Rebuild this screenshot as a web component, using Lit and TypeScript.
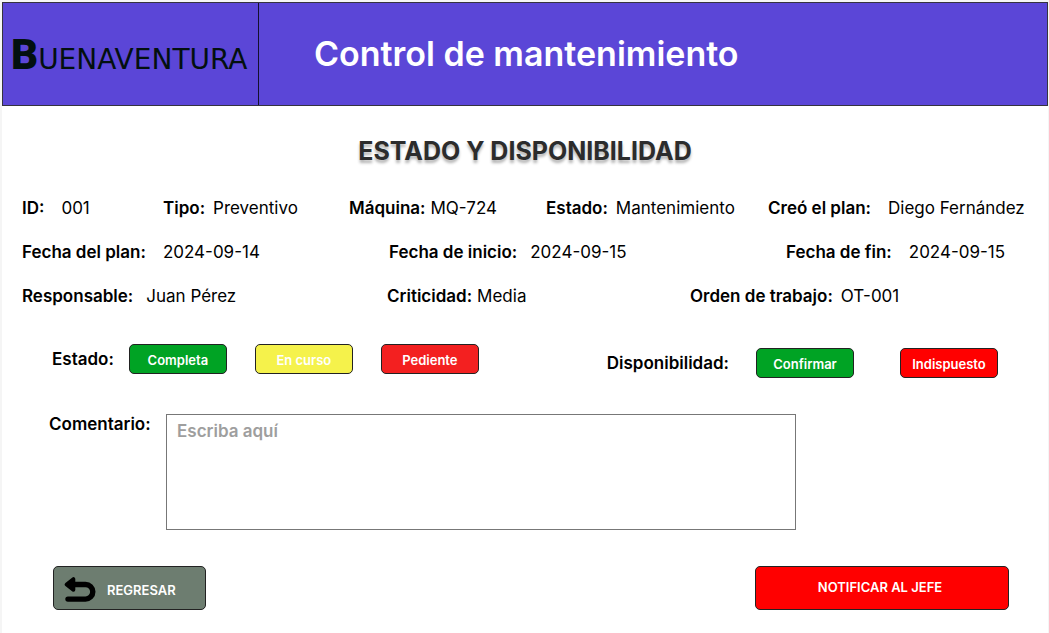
import { LitElement, html, css } from "lit";
import { customElement, state } from "lit/decorators.js";

interface Field {
  label: string;
  value: string;
  gap: "near" | "mid" | "loose" | "far";
}

const GENERAL: Field[] = [
  { label: "ID:", value: "001", gap: "far" },
  { label: "Tipo:", value: "Preventivo", gap: "mid" },
  { label: "Máquina:", value: "MQ-724", gap: "near" },
  { label: "Estado:", value: "Mantenimiento", gap: "mid" },
  { label: "Creó el plan:", value: "Diego Fernández", gap: "far" },
];

const DATES: Field[] = [
  { label: "Fecha del plan:", value: "2024-09-14", gap: "far" },
  { label: "Fecha de inicio:", value: "2024-09-15", gap: "loose" },
  { label: "Fecha de fin:", value: "2024-09-15", gap: "far" },
];

const WORK: Field[] = [
  { label: "Responsable:", value: "Juan Pérez", gap: "loose" },
  { label: "Criticidad:", value: "Media", gap: "near" },
  { label: "Orden de trabajo:", value: "OT-001", gap: "mid" },
];

@customElement("plan-fields")
export class PlanFields extends LitElement {
  static properties = { fields: { attribute: false } };
  declare fields: Field[];

  static styles = css`
    :host {
      display: grid;
      font-size: 17px;
      line-height: 24px;
    }
    .field {
      display: flex;
      white-space: nowrap;
    }
    .near { gap: 5px; }
    .mid { gap: 8px; }
    .loose { gap: 13px; }
    .far { gap: 17px; }
    .label { font-weight: 600; }
  `;

  render() {
    return (this.fields ?? []).map(
      (f) => html`<div class="field ${f.gap}">
        <span class="label">${f.label}</span><span>${f.value}</span>
      </div>`
    );
  }
}

@customElement("app-root")
export class AppRoot extends LitElement {
  @state() private comment = "";

  static styles = css`
    :host {
      display: block;
      box-sizing: border-box;
      min-height: 100vh;
      padding: 2px 1px 0 2px;
      background: #f5f5f5;
      color: #000;
      font-family: Inter, "Liberation Sans", sans-serif;
      font-size: 17px;
      line-height: 24px;
    }
    * { box-sizing: border-box; }
    .page {
      min-height: calc(100vh - 2px);
      background: #fff;
    }
    .header {
      display: flex;
      height: 104px;
      border: 1px solid #35333f;
      background: #5b46d7;
    }
    .brand {
      display: flex;
      flex: none;
      align-items: baseline;
      width: 256px;
      padding: 28px 0 0 8px;
      border-right: 1px solid #14102e;
      color: #03100f;
      font-family: "DejaVu Sans", sans-serif;
      font-size: 28px;
      line-height: 48px;
      white-space: nowrap;
    }
    .initial {
      font-family: Roboto, sans-serif;
      font-size: 42px;
      font-weight: 900;
    }
    .title {
      margin: 0;
      padding: 29px 0 0 55px;
      color: #fff;
      font-size: 34px;
      font-weight: 600;
      line-height: 44px;
    }
    .subtitle {
      margin: 0;
      padding: 28px 0;
      color: #2c2c2c;
      font-size: 25px;
      font-weight: 700;
      line-height: 34px;
      text-align: center;
      text-shadow: 0 3px 3px rgba(0, 0, 0, 0.3);
    }
    .details {
      display: grid;
      gap: 20px;
      padding: 0 20px;
    }
    .general { grid-template-columns: 141fr 186fr 197fr 222fr 260fr; }
    .dates { grid-template-columns: 367fr 397fr 242fr; }
    .work { grid-template-columns: 365fr 303fr 338fr; }
    .states {
      display: flex;
      justify-content: space-between;
      align-items: flex-end;
      padding: 36px 50px 0;
    }
    .group {
      display: flex;
      align-items: center;
      gap: 28px;
      margin: 0;
      padding: 0 0 4px;
      border: 0;
    }
    .wide {
      gap: 46px;
      padding: 4px 0 0;
    }
    .caption {
      margin-right: -13px;
      font-weight: 600;
    }
    .wide .caption { margin-right: -19px; }
    button {
      border: 1px solid #222;
      border-radius: 5px;
      color: #fff;
      font: 600 13px/20px Inter, "Liberation Sans", sans-serif;
      cursor: pointer;
    }
    .chip {
      width: 98px;
      height: 30px;
      padding: 2px 0 0;
    }
    .green { background: #00a324; }
    .yellow { background: #f5f24b; }
    .coral { background: #f32020; }
    .red { background: #f00; }
    .comment {
      display: grid;
      grid-template-columns: 117px 5fr 2fr;
      padding: 36px 0 36px 47px;
    }
    .comment label {
      font-weight: 600;
      line-height: 20px;
    }
    textarea {
      display: block;
      width: 100%;
      height: 116px;
      padding: 4px 10px;
      border: 1px solid #777;
      border-radius: 0;
      background: #fff;
      color: #000;
      font: 600 17px/24px Inter, "Liberation Sans", sans-serif;
      resize: none;
    }
    textarea::placeholder {
      color: #9e9e9e;
      opacity: 1;
    }
    .actions {
      display: flex;
      justify-content: space-between;
      padding: 0 39px 22px 51px;
    }
    .back {
      display: flex;
      align-items: center;
      gap: 11px;
      width: 153px;
      height: 44px;
      padding: 3px 0 0 10px;
      background: #6d7d70;
    }
    .notify {
      width: 254px;
      height: 44px;
      padding: 0 4px 3px 0;
    }
  `;

  private onInput(e: Event) {
    this.comment = (e.target as HTMLTextAreaElement).value;
  }

  render() {
    return html`
      <div class="page">
        <header class="header">
          <div class="brand"><span class="initial">B</span><span>UENAVENTURA</span></div>
          <h1 class="title">Control de mantenimiento</h1>
        </header>
        <main>
          <h2 class="subtitle">ESTADO Y DISPONIBILIDAD</h2>
          <section class="details">
            <plan-fields class="general" .fields=${GENERAL}></plan-fields>
            <plan-fields class="dates" .fields=${DATES}></plan-fields>
            <plan-fields class="work" .fields=${WORK}></plan-fields>
          </section>
          <section class="states">
            <div class="group" role="group" aria-labelledby="state">
              <span class="caption" id="state">Estado:</span>
              <button class="chip green">Completa</button>
              <button class="chip yellow">En curso</button>
              <button class="chip coral">Pediente</button>
            </div>
            <div class="group wide" role="group" aria-labelledby="availability">
              <span class="caption" id="availability">Disponibilidad:</span>
              <button class="chip green">Confirmar</button>
              <button class="chip red">Indispuesto</button>
            </div>
          </section>
          <section class="comment">
            <label for="comment">Comentario:</label>
            <textarea id="comment" placeholder="Escriba aquí" .value=${this.comment} @input=${this.onInput}></textarea>
          </section>
          <footer class="actions">
            <button class="back">
              <svg width="32" height="26" viewBox="0 0 32 26" aria-hidden="true">
                <path d="M8 7.5H21.5a7.2 7.2 0 0 1 0 14.6H4" fill="none" stroke="#000" stroke-width="5.4" stroke-linecap="round" />
                <path d="M2.5 7.5L9.5 2V13Z" stroke="#000" stroke-width="3.6" stroke-linejoin="round" />
              </svg>
              <span>REGRESAR</span>
            </button>
            <button class="notify red">NOTIFICAR AL JEFE</button>
          </footer>
        </main>
      </div>
    `;
  }
}
